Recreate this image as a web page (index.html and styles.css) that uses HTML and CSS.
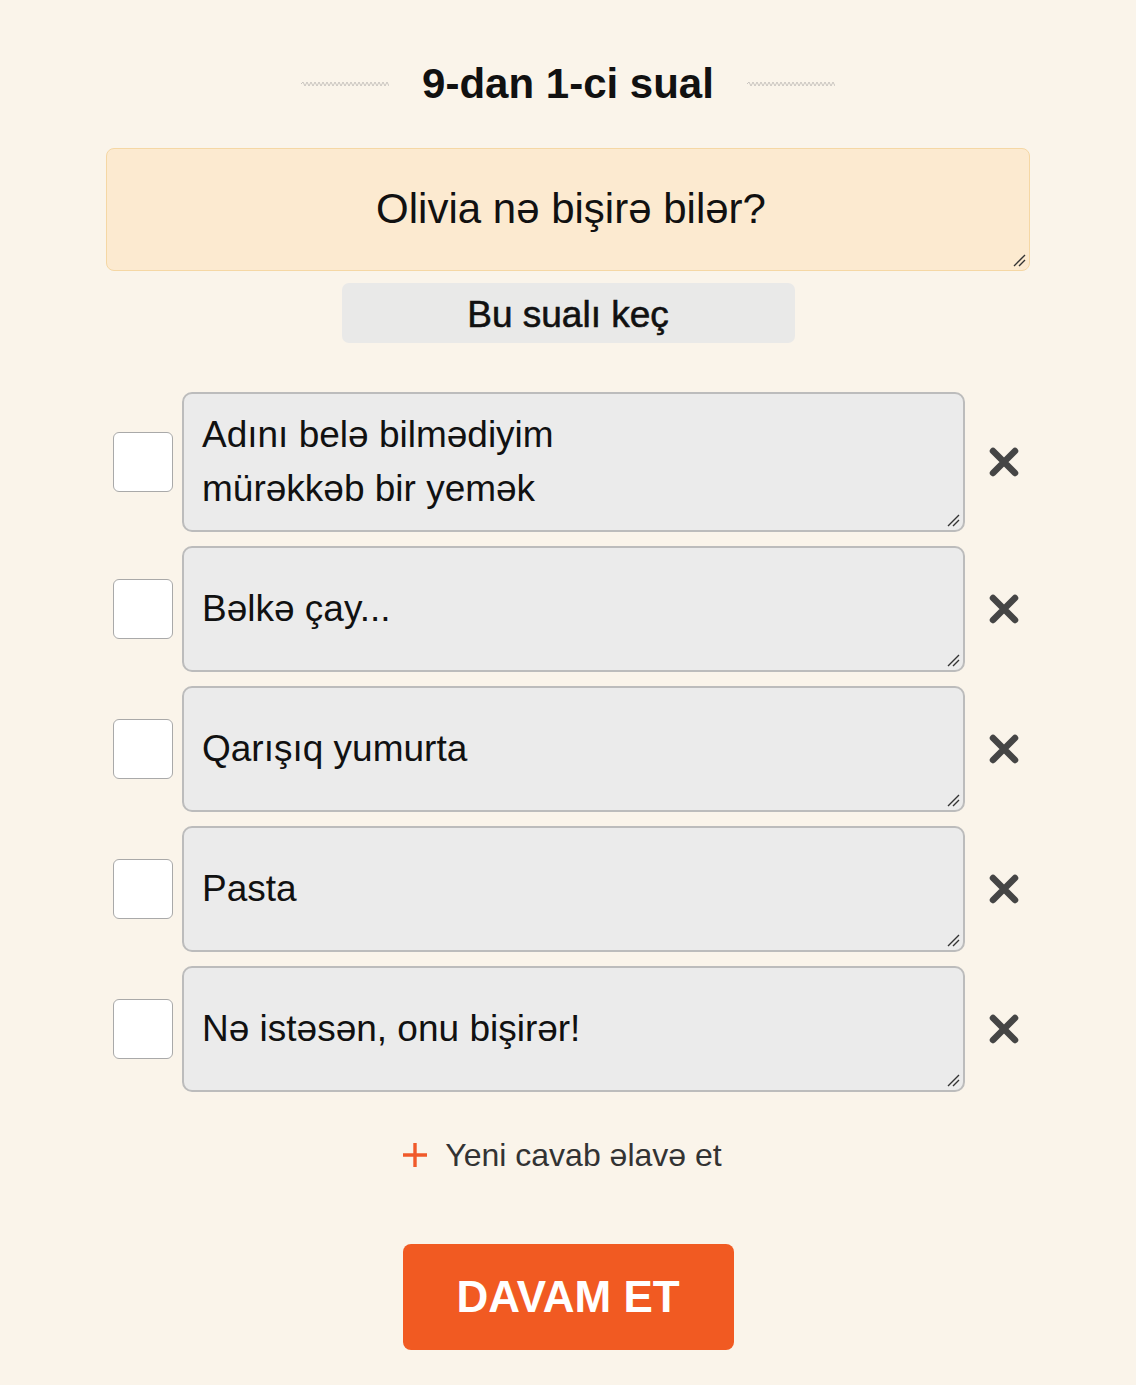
FILE: index.html
```html
<!DOCTYPE html>
<html lang="az">
<head>
<meta charset="utf-8">
<title>Sual</title>
<link rel="stylesheet" href="styles.css">
</head>
<body>
<main class="page">
  <header class="title-row">
    <svg class="wave" width="88" height="6" viewBox="0 0 88 6"><path d="M0 3 l2 -2 l2 4 l2 -4 l2 4 l2 -4 l2 4 l2 -4 l2 4 l2 -4 l2 4 l2 -4 l2 4 l2 -4 l2 4 l2 -4 l2 4 l2 -4 l2 4 l2 -4 l2 4 l2 -4 l2 4 l2 -4 l2 4 l2 -4 l2 4 l2 -4 l2 4 l2 -4 l2 4 l2 -4 l2 4 l2 -4 l2 4 l2 -4 l2 4 l2 -4 l2 4 l2 -4 l2 4 l2 -4 l2 4 l2 -4 l2 4" fill="none" stroke="#c9c5c0" stroke-width="1"/></svg>
    <h1 class="title">9-dan 1-ci sual</h1>
    <svg class="wave" width="88" height="6" viewBox="0 0 88 6"><path d="M0 3 l2 -2 l2 4 l2 -4 l2 4 l2 -4 l2 4 l2 -4 l2 4 l2 -4 l2 4 l2 -4 l2 4 l2 -4 l2 4 l2 -4 l2 4 l2 -4 l2 4 l2 -4 l2 4 l2 -4 l2 4 l2 -4 l2 4 l2 -4 l2 4 l2 -4 l2 4 l2 -4 l2 4 l2 -4 l2 4 l2 -4 l2 4 l2 -4 l2 4 l2 -4 l2 4 l2 -4 l2 4 l2 -4 l2 4 l2 -4 l2 4" fill="none" stroke="#c9c5c0" stroke-width="1"/></svg>
  </header>

  <div class="question box">
    <span>Olivia nə bişirə bilər?</span>
    <svg class="grip" width="14" height="14" viewBox="0 0 14 14"><path d="M2 13 L13 2 M7 13 L13 7" stroke="#333" stroke-width="1.4"/></svg>
  </div>

  <div class="skip-wrap"><button class="skip">Bu sualı keç</button></div>

  <ul class="answers">
    <li class="answer">
      <span class="check"></span>
      <div class="field box tall">
        <span>Adını belə bilmədiyim<br>mürəkkəb bir yemək</span>
        <svg class="grip" width="14" height="14" viewBox="0 0 14 14"><path d="M2 13 L13 2 M7 13 L13 7" stroke="#333" stroke-width="1.4"/></svg>
      </div>
      <span class="remove"><svg width="32" height="32" viewBox="0 0 32 32"><path d="M5 5 L27 27 M27 5 L5 27" stroke="#454545" stroke-width="6.5" stroke-linecap="round"/></svg></span>
    </li>
    <li class="answer">
      <span class="check"></span>
      <div class="field box">
        <span>Bəlkə çay...</span>
        <svg class="grip" width="14" height="14" viewBox="0 0 14 14"><path d="M2 13 L13 2 M7 13 L13 7" stroke="#333" stroke-width="1.4"/></svg>
      </div>
      <span class="remove"><svg width="32" height="32" viewBox="0 0 32 32"><path d="M5 5 L27 27 M27 5 L5 27" stroke="#454545" stroke-width="6.5" stroke-linecap="round"/></svg></span>
    </li>
    <li class="answer">
      <span class="check"></span>
      <div class="field box">
        <span>Qarışıq yumurta</span>
        <svg class="grip" width="14" height="14" viewBox="0 0 14 14"><path d="M2 13 L13 2 M7 13 L13 7" stroke="#333" stroke-width="1.4"/></svg>
      </div>
      <span class="remove"><svg width="32" height="32" viewBox="0 0 32 32"><path d="M5 5 L27 27 M27 5 L5 27" stroke="#454545" stroke-width="6.5" stroke-linecap="round"/></svg></span>
    </li>
    <li class="answer">
      <span class="check"></span>
      <div class="field box">
        <span>Pasta</span>
        <svg class="grip" width="14" height="14" viewBox="0 0 14 14"><path d="M2 13 L13 2 M7 13 L13 7" stroke="#333" stroke-width="1.4"/></svg>
      </div>
      <span class="remove"><svg width="32" height="32" viewBox="0 0 32 32"><path d="M5 5 L27 27 M27 5 L5 27" stroke="#454545" stroke-width="6.5" stroke-linecap="round"/></svg></span>
    </li>
    <li class="answer">
      <span class="check"></span>
      <div class="field box">
        <span>Nə istəsən, onu bişirər!</span>
        <svg class="grip" width="14" height="14" viewBox="0 0 14 14"><path d="M2 13 L13 2 M7 13 L13 7" stroke="#333" stroke-width="1.4"/></svg>
      </div>
      <span class="remove"><svg width="32" height="32" viewBox="0 0 32 32"><path d="M5 5 L27 27 M27 5 L5 27" stroke="#454545" stroke-width="6.5" stroke-linecap="round"/></svg></span>
    </li>
  </ul>

  <div class="add">
    <svg class="plus" width="26" height="26" viewBox="0 0 26 26"><path d="M13 1 V25 M1 13 H25" stroke="#f0592a" stroke-width="3.4"/></svg>
    <span>Yeni cavab əlavə et</span>
  </div>

  <div class="continue-wrap"><button class="continue">DAVAM ET</button></div>
</main>
</body>
</html>
```

FILE: styles.css
```css
* { box-sizing: border-box; }
html, body {
  margin: 0;
  padding: 0;
  background: #faf4ea;
}
body {
  font-family: "Liberation Sans", Arial, sans-serif;
  color: #111;
}
.page {
  width: 924px;
  margin: 0 auto;
  padding-top: 60px;
}
.title-row {
  display: flex;
  align-items: center;
  justify-content: center;
  gap: 33px;
  height: 48px;
}
.title {
  margin: 0;
  font-size: 42px;
  font-weight: 700;
  line-height: 48px;
  color: #111;
}
.box { position: relative; }
.grip {
  position: absolute;
  right: 3px;
  bottom: 3px;
}
.question {
  margin-top: 40px;
  height: 123px;
  background: #fcead0;
  border: 1.5px solid #f5d7a4;
  border-radius: 8px;
  display: flex;
  align-items: center;
  justify-content: center;
  font-size: 42px;
  color: #111;
  padding-bottom: 2px;
  padding-left: 6px;
}
.skip-wrap {
  display: flex;
  justify-content: center;
  margin-top: 12px;
}
.skip {
  width: 453px;
  height: 60px;
  border: none;
  border-radius: 7px;
  background: #e9e9e8;
  font-family: "Liberation Sans", Arial, sans-serif;
  font-size: 37px;
  color: #111;
  -webkit-text-stroke: 0.6px #111;
  padding: 4px 0 0;
}
.answers {
  list-style: none;
  margin: 49px 0 0;
  padding: 0 0 0 7px;
  display: flex;
  flex-direction: column;
  gap: 14px;
}
.answer {
  display: flex;
  align-items: center;
}
.check {
  width: 60px;
  height: 60px;
  flex: none;
  background: #fff;
  border: 1.5px solid #a9a9a9;
  border-radius: 6px;
  margin-right: 9px;
}
.field {
  width: 783px;
  min-height: 126px;
  flex: none;
  background: #ebebeb;
  border: 2px solid #bcbcbc;
  border-radius: 10px;
  display: flex;
  align-items: center;
  padding: 14px 18px;
  font-size: 37px;
  line-height: 54px;
  color: #111;
}
.field.tall { min-height: 140px; }
.remove {
  flex: 1;
  display: flex;
  justify-content: flex-end;
  padding-right: 10px;
}
.remove svg { display: block; }
.add {
  margin-top: 43px;
  display: flex;
  align-items: center;
  justify-content: center;
  gap: 17px;
  height: 44px;
  font-size: 32px;
  color: #333;
  padding-right: 12px;
  padding-bottom: 4px;
}
.plus { display: block; }
.continue-wrap {
  display: flex;
  justify-content: center;
  margin-top: 65px;
}
.continue {
  width: 331px;
  height: 106px;
  border: none;
  border-radius: 8px;
  background: #f15a22;
  color: #fff;
  font-family: "Liberation Sans", Arial, sans-serif;
  font-size: 44px;
  font-weight: 700;
  padding: 0;
}
```
